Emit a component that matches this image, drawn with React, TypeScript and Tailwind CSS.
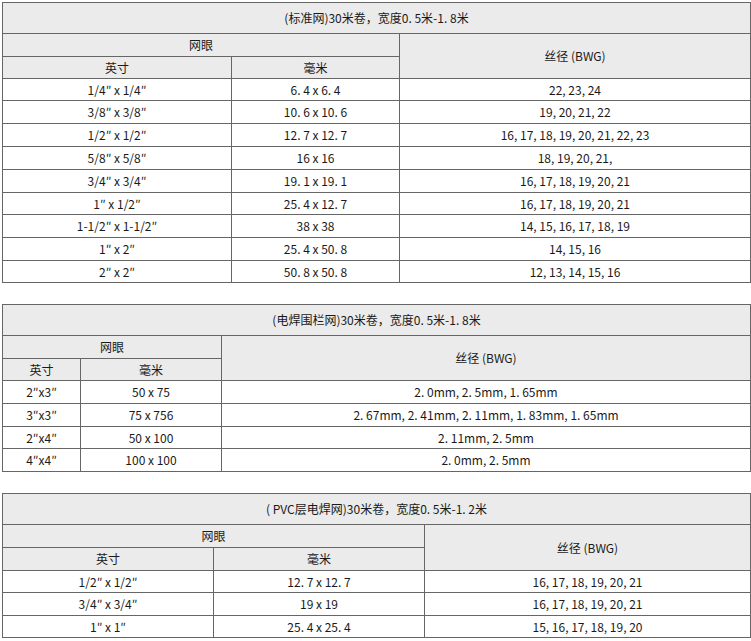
import React from "react";

type Row = [string, string, string];

const t1: Row[] = [
  ["1/4″ x 1/4″", "6. 4 x 6. 4", "22, 23, 24"],
  ["3/8″ x 3/8″", "10. 6 x 10. 6", "19, 20, 21, 22"],
  ["1/2″ x 1/2″", "12. 7 x 12. 7", "16, 17, 18, 19, 20, 21, 22, 23"],
  ["5/8″ x 5/8″", "16 x 16", "18, 19, 20, 21,"],
  ["3/4″ x 3/4″", "19. 1 x 19. 1", "16, 17, 18, 19, 20, 21"],
  ["1″ x 1/2″", "25. 4 x 12. 7", "16, 17, 18, 19, 20, 21"],
  ["1-1/2″ x 1-1/2″", "38 x 38", "14, 15, 16, 17, 18, 19"],
  ["1″ x 2″", "25. 4 x 50. 8", "14, 15, 16"],
  ["2″ x 2″", "50. 8 x 50. 8", "12, 13, 14, 15, 16"],
];
const t1h = [22, 23, 23, 23, 23, 22, 23, 23, 22];

const t2: Row[] = [
  ["2″x3″", "50 x 75", "2. 0mm, 2. 5mm, 1. 65mm"],
  ["3″x3″", "75 x 756", "2. 67mm, 2. 41mm, 2. 11mm, 1. 83mm, 1. 65mm"],
  ["2″x4″", "50 x 100", "2. 11mm, 2. 5mm"],
  ["4″x4″", "100 x 100", "2. 0mm, 2. 5mm"],
];
const t2h = [23, 23, 22, 23];

const t3: Row[] = [
  ["1/2″ x 1/2″", "12. 7 x 12. 7", "16, 17, 18, 19, 20, 21"],
  ["3/4″ x 3/4″", "19 x 19", "16, 17, 18, 19, 20, 21"],
  ["1″ x 1″", "25. 4 x 25. 4", "15, 16, 17, 18, 19, 20"],
];
const t3h = [22, 23, 22];

const cell = "border border-[#666] text-center align-middle p-0";

function Spec({
  title,
  cols,
  rows,
  heights,
  h2,
}: {
  title: string;
  cols: [number, number, number];
  rows: Row[];
  heights: number[];
  h2: number;
}) {
  return (
    <table className="table-fixed border-collapse w-[748px] ml-[2px] text-[12px] leading-none text-[#1a1a1a]">
      <colgroup>
        <col style={{ width: cols[0] }} />
        <col style={{ width: cols[1] }} />
        <col style={{ width: cols[2] }} />
      </colgroup>
      <tbody>
        <tr className="h-[31px] bg-[#ebebeb]">
          <td colSpan={3} className={cell}>
            {title}
          </td>
        </tr>
        <tr className="h-[23px] bg-[#ebebeb]">
          <td colSpan={2} className={cell}>
            网眼
          </td>
          <td rowSpan={2} className={cell}>
            丝径 (BWG)
          </td>
        </tr>
        <tr className="bg-[#ebebeb]" style={{ height: h2 }}>
          <td className={cell}>英寸</td>
          <td className={cell}>毫米</td>
        </tr>
        {rows.map((r, i) => (
          <tr key={i} className="bg-white" style={{ height: heights[i] }}>
            <td className={cell}>{r[0]}</td>
            <td className={cell}>{r[1]}</td>
            <td className={cell}>{r[2]}</td>
          </tr>
        ))}
      </tbody>
    </table>
  );
}

export default function App() {
  return (
    <div
      className="w-[751px] h-[641px] bg-white pt-[2px] flex flex-col gap-[21px] overflow-hidden"
      style={{ fontFamily: '"Noto Sans CJK SC", "Liberation Sans", sans-serif' }}
    >
      <Spec
        title="(标准网)30米卷，宽度0. 5米-1. 8米"
        cols={[229, 168, 351]}
        rows={t1}
        heights={t1h}
        h2={22}
      />
      <Spec
        title="(电焊围栏网)30米卷，宽度0. 5米-1. 8米"
        cols={[78, 141, 529]}
        rows={t2}
        heights={t2h}
        h2={22}
      />
      <Spec
        title="( PVC层电焊网)30米卷，宽度0. 5米-1. 2米"
        cols={[211, 211, 326]}
        rows={t3}
        heights={t3h}
        h2={23}
      />
    </div>
  );
}
